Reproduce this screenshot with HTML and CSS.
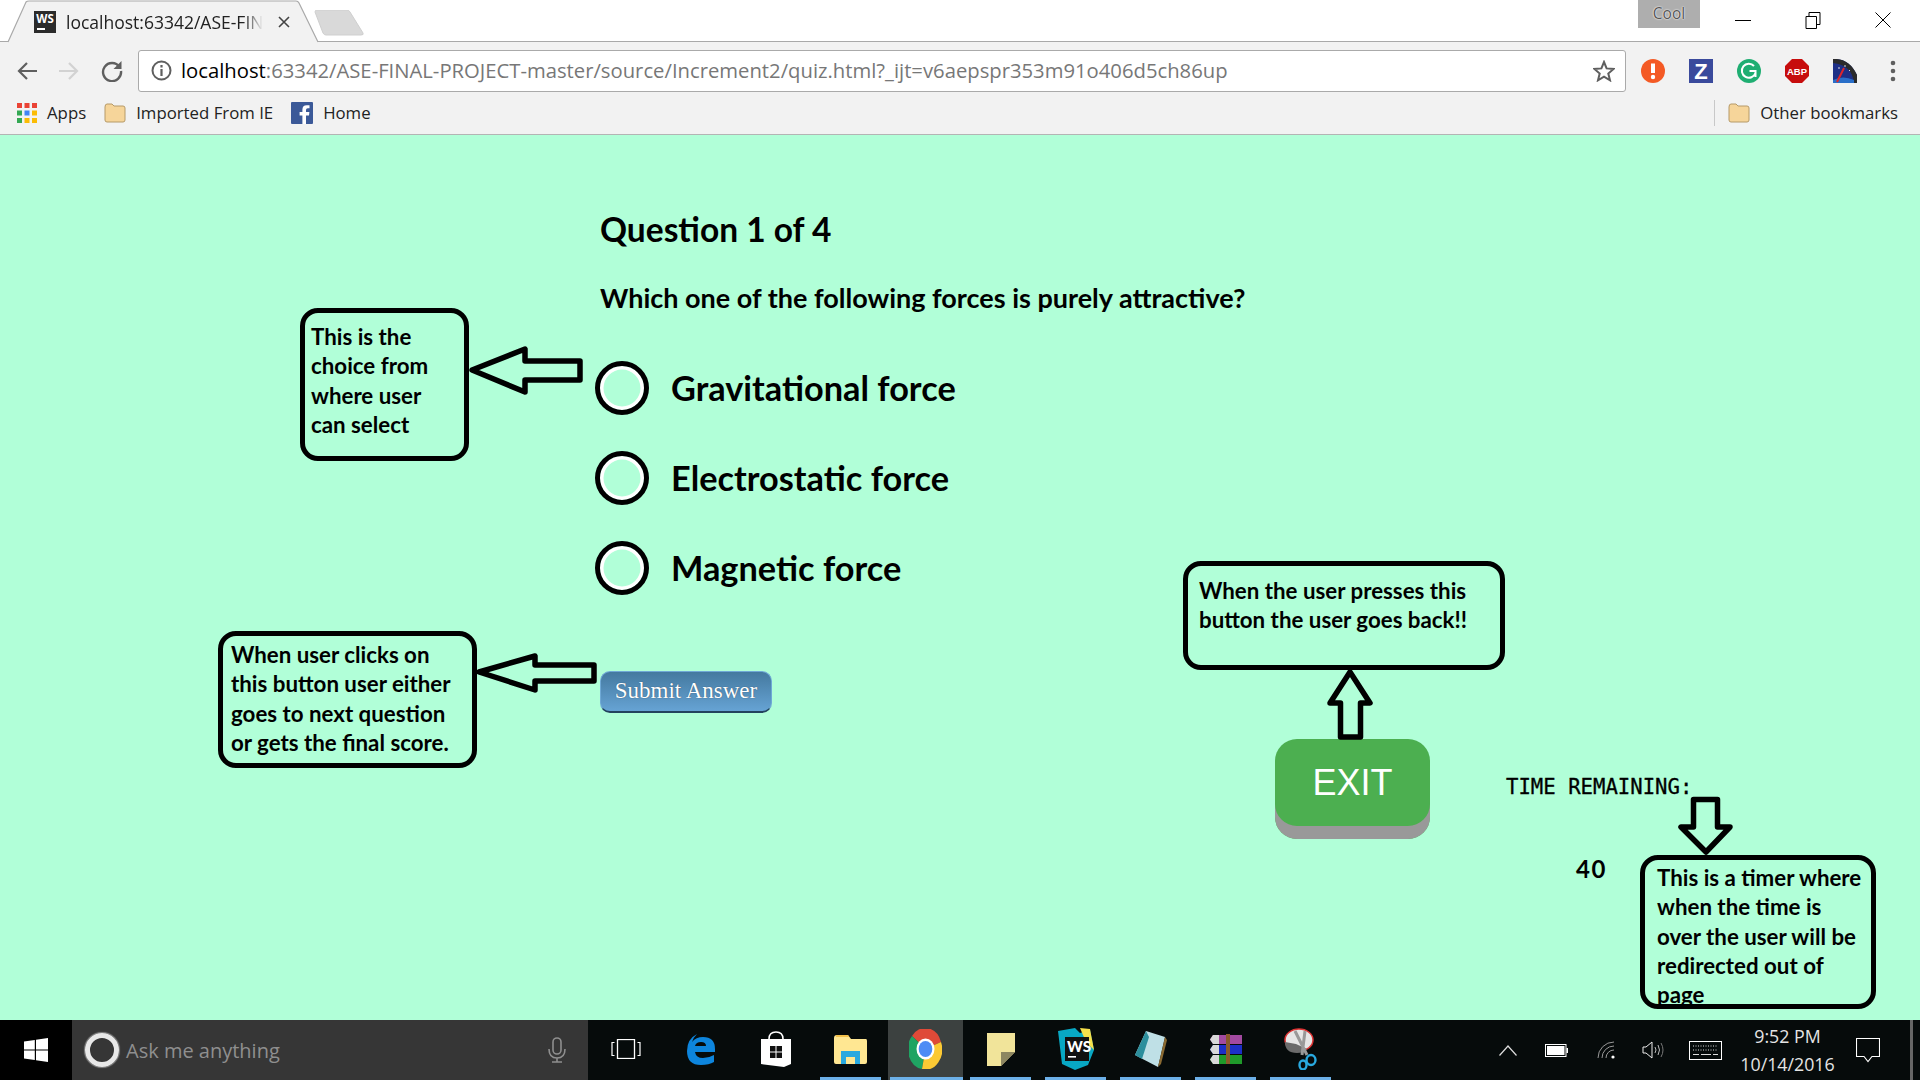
FILE: index.html
```html
<!DOCTYPE html>
<html>
<head>
    <title>localhost:63342/ASE-FINAL-PROJECT-master</title>
    <link rel="stylesheet" href="styles.css">
</head>
<body>
    <!-- Browser frame -->
    <header class="browser">
        <div class="tabstrip">
            <div class="tab">
                <svg class="tab-shape" width="312" height="43" viewBox="0 0 312 43"><path d="M1 42 L19 2 Q20 1 22 1 L289 1 Q291 1 292 3 L311 42" fill="#f2f2f2" stroke="#a9a9a9" stroke-width="1.2"/></svg>
                <span class="ws-logo">WS</span>
                <span class="tab-title">localhost:63342/ASE-FIN</span>
                <svg class="tab-close" width="12" height="12" viewBox="0 0 12 12"><path d="M1 1 L11 11 M11 1 L1 11" stroke="#444" stroke-width="1.6"/></svg>
            </div>
            <svg class="newtab" width="50" height="26" viewBox="0 0 50 26"><path d="M1 2 Q1 0 3 0 L33 0 Q35 0 36 2 L49 23 Q50 25 47 25 L12 25 Q10 25 9 23 Z" fill="#d9d9d9" stroke="#cfcfcf"/></svg>
            <span class="cool">Cool</span>
            <div class="winctl">
                <svg width="16" height="16" viewBox="0 0 16 16"><path d="M0 8.5 H16" stroke="#000"/></svg>
                <svg width="16" height="18" viewBox="0 0 16 18"><path d="M1 5.5 H11.5 V17.5 H1 Z M4 5 V1.5 H15 V13.5 H12" fill="none" stroke="#000"/></svg>
                <svg width="16" height="16" viewBox="0 0 16 16"><path d="M0.5 0.5 L15.5 15.5 M15.5 0.5 L0.5 15.5" stroke="#000"/></svg>
            </div>
        </div>
        <div class="toolbar">
            <svg class="nav" width="20" height="20" viewBox="0 0 20 20"><path d="M20 10 H2 M10 2 L2 10 L10 18" fill="none" stroke="#5f5f5f" stroke-width="2.2"/></svg>
            <svg class="nav" width="20" height="20" viewBox="0 0 20 20"><path d="M0 10 H18 M10 2 L18 10 L10 18" fill="none" stroke="#d2d2d2" stroke-width="2.2"/></svg>
            <svg class="nav" width="22" height="22" viewBox="0 0 22 22"><path d="M18.5 7 A9 9 0 1 0 20 11" fill="none" stroke="#5f5f5f" stroke-width="2.4"/><path d="M20.5 1 V9 H12.5 Z" fill="#5f5f5f"/></svg>
            <div class="omnibox">
                <svg width="21" height="21" viewBox="0 0 21 21"><circle cx="10.5" cy="10.5" r="9" fill="none" stroke="#5f5f5f" stroke-width="2"/><path d="M10.5 9 V16 M10.5 5 V7.4" stroke="#5f5f5f" stroke-width="2.2"/></svg>
                <span class="url"><b>localhost</b>:63342/ASE-FINAL-PROJECT-master/source/Increment2/quiz.html?_ijt=v6aepspr353m91o406d5ch86up</span>
                <svg class="star" width="22" height="22" viewBox="0 0 22 22"><path d="M11 2 L13.6 8.4 L20.6 9 L15.3 13.5 L17 20.3 L11 16.7 L5 20.3 L6.7 13.5 L1.4 9 L8.4 8.4 Z" fill="none" stroke="#5f5f5f" stroke-width="2"/></svg>
            </div>
            <div class="extensions">
                <svg width="24" height="24" viewBox="0 0 24 24"><circle cx="12" cy="12" r="12" fill="#f45a25"/><path d="M12 4.5 V14" stroke="#fff" stroke-width="4"/><circle cx="12" cy="18" r="2.2" fill="#fff"/></svg>
                <svg width="24" height="24" viewBox="0 0 24 24"><rect width="24" height="24" fill="#3a4a9c"/><text x="12" y="20" class="ext-z">Z</text></svg>
                <svg width="24" height="24" viewBox="0 0 24 24"><circle cx="12" cy="12" r="12" fill="#1fae72"/><path d="M17 7 A7 7 0 1 0 18.5 14 L18.5 12 H12.5 M18.5 14 V18" fill="none" stroke="#fff" stroke-width="2"/></svg>
                <svg width="24" height="24" viewBox="0 0 24 24"><path d="M7 0 H17 L24 7 V17 L17 24 H7 L0 17 V7 Z" fill="#c70d0d"/><text x="12" y="16" class="ext-abp">ABP</text></svg>
                <svg width="24" height="24" viewBox="0 0 24 24"><path d="M0 24 V0 Q16 -1 24 16 V24 Z" fill="#1e2f86"/><path d="M0 0 Q16 -1 24 16 V24 H21 Q19 6 0 4 Z" fill="#2b2b2b"/><path d="M0 24 H21 V21 Q10 16 0 21 Z" fill="#2a6fc9"/><path d="M4 23 L11 9" stroke="#e0262a" stroke-width="2"/><path d="M6 8 V10 M12 6 V8 M17 11 L16 12" stroke="#ddd"/></svg>
                <svg class="ext-menu" width="6" height="22" viewBox="0 0 6 22"><circle cx="3" cy="3" r="2.3" fill="#5f5f5f"/><circle cx="3" cy="11" r="2.3" fill="#5f5f5f"/><circle cx="3" cy="19" r="2.3" fill="#5f5f5f"/></svg>
            </div>
        </div>
        <div class="bookmarks">
            <a class="bookmark">
                <svg width="20" height="20" viewBox="0 0 20 20"><rect width="5" height="5" fill="#ea4335"/><rect x="7.5" width="5" height="5" fill="#ea4335"/><rect x="15" width="5" height="5" fill="#ea4335"/><rect y="7.5" width="5" height="5" fill="#34a853"/><rect x="7.5" y="7.5" width="5" height="5" fill="#4285f4"/><rect x="15" y="7.5" width="5" height="5" fill="#fbbc05"/><rect y="15" width="5" height="5" fill="#34a853"/><rect x="7.5" y="15" width="5" height="5" fill="#fbbc05"/><rect x="15" y="15" width="5" height="5" fill="#fbbc05"/></svg>
                Apps
            </a>
            <a class="bookmark">
                <svg class="folder" width="22" height="20" viewBox="0 0 22 20"><path d="M1 4 Q1 1 3 1 H8 L10 3 H19 Q21 3 21 5 V17 Q21 19 19 19 H3 Q1 19 1 17 Z" fill="#f6d59a" stroke="#b69a68"/></svg>
                Imported From IE
            </a>
            <a class="bookmark">
                <svg width="22" height="22" viewBox="0 0 22 22"><rect width="22" height="22" rx="1" fill="#3b5998"/><path d="M15 22 V13.5 H18 L18.4 10 H15 V8 Q15 6.3 16.8 6.3 H18.5 V3.2 H15.8 Q11.4 3.2 11.4 7.6 V10 H8.6 V13.5 H11.4 V22 Z" fill="#fff"/></svg>
                Home
            </a>
            <a class="bookmark other">
                <svg class="folder" width="22" height="20" viewBox="0 0 22 20"><path d="M1 4 Q1 1 3 1 H8 L10 3 H19 Q21 3 21 5 V17 Q21 19 19 19 H3 Q1 19 1 17 Z" fill="#f6d59a" stroke="#b69a68"/></svg>
                Other bookmarks
            </a>
        </div>
    </header>

    <main class="page">
        <section class="quiz">
            <h1>Question 1 of 4</h1>
            <p class="question">Which one of the following forces is purely attractive?</p>
            <label class="choice"><input type="radio" name="answer"> Gravitational force</label>
            <label class="choice"><input type="radio" name="answer"> Electrostatic force</label>
            <label class="choice"><input type="radio" name="answer"> Magnetic force</label>
            <button class="submit">Submit Answer</button>
        </section>
        <button class="exit">EXIT</button>
        <div class="timer">
            <p class="timer-label">TIME REMAINING:</p>
            <p class="timer-count">40</p>
        </div>

        <!-- Annotations drawn over the page -->
        <div class="callout callout-choice">This is the<br>choice from<br>where user<br>can select</div>
        <div class="callout callout-submit">When user clicks on<br>this button user either<br>goes to next question<br>or gets the final score.</div>
        <div class="callout callout-exit">When the user presses this<br>button the user goes back!!</div>
        <div class="callout callout-timer">This is a timer where<br>when the time is<br>over the user will be<br>redirected out of<br>page</div>
        <svg class="arrows" width="1920" height="885" viewBox="0 135 1920 885">
            <polygon points="472,370 525,349 525,361 580,361 580,380 525,380 525,392"/>
            <polygon points="479,672 535,656 535,665 594,665 594,681 535,681 535,690"/>
            <polygon points="1350,672 1370,703 1360.5,703 1360.5,737 1340.5,737 1340.5,703 1330,703"/>
            <polygon points="1693.5,799.5 1717.5,799.5 1717.5,827 1730,827 1706,852 1681,827 1693.5,827"/>
        </svg>
    </main>

    <!-- Windows taskbar -->
    <footer class="taskbar">
        <div class="start">
            <svg width="24" height="24" viewBox="0 0 24 24"><path d="M0 3.4 L10.8 1.9 V11.4 H0 Z M12 1.7 L24 0 V11.4 H12 Z M0 12.6 H10.8 V22.1 L0 20.6 Z M12 12.6 H24 V24 L12 22.3 Z" fill="#fff"/></svg>
        </div>
        <div class="search">
            <span class="cortana"></span>
            <span class="search-text">Ask me anything</span>
            <svg class="mic" width="18" height="26" viewBox="0 0 18 26"><rect x="5" y="1" width="8" height="16" rx="4" fill="none" stroke="#8f8f8f" stroke-width="1.6"/><path d="M1 12 Q1 21 9 21 Q17 21 17 12 M9 21 V25 M4 25 H14" fill="none" stroke="#8f8f8f" stroke-width="1.6"/></svg>
        </div>
        <div class="apps">
            <div class="app">
                <svg width="30" height="20" viewBox="0 0 30 20"><rect x="6.5" y="0.5" width="17" height="19" fill="none" stroke="#fff" stroke-width="1.3"/><path d="M3.5 3.5 H1 V16.5 H3.5 M26.5 3.5 H29 V16.5 H26.5" fill="none" stroke="#fff" stroke-width="1.2"/></svg>
            </div>
            <div class="app">
                <svg width="30" height="32" viewBox="0 0 30 32"><path d="M29 19 H9 Q10 25 17 25 Q23 25 28 22 V29 Q23 32 15 32 Q1 32 1 18 Q1 6 11 1 Q7 5 6 9 Q10 4 17 4 Q29 4 29 16 Z M20 13 Q20 9 15 9 Q10 9 9 13 Z" fill="#0d85dd" fill-rule="evenodd"/></svg>
            </div>
            <div class="app">
                <svg width="32" height="36" viewBox="0 0 32 36"><path d="M9 8 Q9 1 16 1 Q23 1 23 8" fill="none" stroke="#fff" stroke-width="1.6"/><path d="M1 8 H31 V33 L24 36 L1 33 Z" fill="#fff"/><path d="M10 15 H15.5 V20.5 H10 Z M16.5 15 H22 V20.5 H16.5 Z M10 21.5 H15.5 V27 H10 Z M16.5 21.5 H22 V27 H16.5 Z" fill="#111"/></svg>
            </div>
            <div class="app open">
                <svg width="33" height="30" viewBox="0 0 33 30"><path d="M0 4 Q0 1 3 1 H14 L17 5 H32 Q33 5 33 7 V28 Q33 30 31 30 H2 Q0 30 0 28 Z" fill="#ffe792"/><path d="M2 1 H14 L15 3 H2 Z" fill="#f3c14b"/><path d="M7 30 V17 H26 V30 H21 V23 H12 V30 Z" fill="#29a9df"/></svg>
            </div>
            <div class="app open active">
                <svg width="33" height="40" viewBox="0 0 33 40"><path d="M16.5 20 L3 7 A16.5 20 0 0 1 32 13 Z" fill="#df4a38"/><path d="M16.5 20 L3 7 A16.5 20 0 0 0 13 40 Z" fill="#1fa463"/><path d="M16.5 20 L32 13 A16.5 20 0 0 1 13 40 Z" fill="#fcc934"/><ellipse cx="16.5" cy="20" rx="9" ry="10.5" fill="#fff"/><ellipse cx="16.5" cy="20" rx="6.8" ry="8" fill="#4d8cf5"/></svg>
            </div>
            <div class="app open">
                <svg width="28" height="33" viewBox="0 0 28 33"><path d="M0 0 H28 V19 L14 33 H0 Z" fill="#f1e49a"/><path d="M28 19 L14 33 V19 Z" fill="#8c8660"/></svg>
            </div>
            <div class="app open">
                <svg width="36" height="42" viewBox="0 0 36 42"><path d="M0 3 L17 0 L22 5 L32 2 L36 22 L30 37 L17 42 L4 36 Z" fill="#08a8c4"/><path d="M22 0 L32 1 L36 22 L28 14 Z" fill="#f5e04b"/><rect x="7" y="9" width="24" height="24" fill="#111"/><rect x="10" y="28" width="8" height="1.6" fill="#fff"/></svg>
                <span class="ws-text">WS</span>
            </div>
            <div class="app open">
                <svg width="33" height="36" viewBox="0 0 33 36"><path d="M12 0 L31 6 L24 36 L1 24 Z" fill="#bfe0e6"/><path d="M12 0 L1 24 L8 28 L15 6 Z" fill="#2c8f9d"/><path d="M31 6 L33 9 L27 33 L24 36 Z" fill="#8a6a32"/></svg>
            </div>
            <div class="app open">
                <svg width="32" height="30" viewBox="0 0 32 30"><path d="M3 1 H32 V10 H3 L0 5.5 Z" fill="#a24aa0"/><path d="M3 11 H32 V20 H3 L0 15.5 Z" fill="#1c2fc7"/><path d="M3 21 H32 V30 H3 L0 25.5 Z" fill="#1f9a2a"/><path d="M0 5.5 L3 10 H9 V1 H3 Z M0 15.5 L3 20 H9 V11 H3 Z M0 25.5 L3 30 H9 V21 H3 Z" fill="#d8d8d8"/><rect x="16" width="4" height="30" fill="#8a5a2a"/></svg>
            </div>
            <div class="app open">
                <svg width="33" height="42" viewBox="0 0 33 42"><ellipse cx="15" cy="12" rx="14" ry="11" fill="#e6e6e6" stroke="#d33" stroke-width="1.5"/><path d="M1 14 Q1 25 13 25 Q20 25 23 21 L12 16 Z" fill="#6b6b6b"/><path d="M11 3 L23 27 M21 3 L18 27" stroke="#999" stroke-width="3"/><ellipse cx="27" cy="32" rx="4.5" ry="5" fill="none" stroke="#29a9df" stroke-width="2.4"/><ellipse cx="19" cy="37" rx="3.5" ry="4.5" fill="none" stroke="#29a9df" stroke-width="2.4"/></svg>
            </div>
        </div>
        <div class="tray">
            <svg class="tray-chevron" width="18" height="11" viewBox="0 0 18 11"><path d="M0.5 10.5 L9 1 L17.5 10.5" fill="none" stroke="#ddd" stroke-width="1.2"/></svg>
            <svg class="tray-battery" width="23" height="13" viewBox="0 0 23 13"><rect x="0.5" y="0.5" width="20.5" height="12" fill="none" stroke="#fff"/><rect x="2" y="2" width="17.5" height="9" fill="#fff"/><rect x="21.5" y="4" width="1.5" height="5" fill="#fff"/></svg>
            <svg class="tray-wifi" width="18" height="18" viewBox="0 0 18 18"><path d="M1 17 A16 16 0 0 1 17 1 M5 17 A12 12 0 0 1 17 5 M9 17 A8 8 0 0 1 17 9" fill="none" stroke="#999" stroke-width="1"/><circle cx="16" cy="16" r="1.6" fill="#fff"/></svg>
            <svg class="tray-speaker" width="22" height="18" viewBox="0 0 22 18"><path d="M1 6 H4 L10 1 V17 L4 12 H1 Z" fill="none" stroke="#eee"/><path d="M13 6 Q15 9 13 12 M16 4 Q19 9 16 14" fill="none" stroke="#bbb"/><path d="M19 2 Q23 9 19 16" fill="none" stroke="#777"/></svg>
            <svg class="tray-keyboard" width="33" height="19" viewBox="0 0 33 19"><rect x="0.5" y="0.5" width="32" height="18" fill="none" stroke="#fff"/><path d="M4 5 H29 M4 9 H29" stroke="#ddd" stroke-dasharray="1 1.5"/><path d="M4 13.5 H10 M12 13.5 H22 M24 13.5 H29" stroke="#ddd"/></svg>
            <div class="clock">
                <span>9:52 PM</span>
                <span>10/14/2016</span>
            </div>
            <svg class="tray-notify" width="24" height="25" viewBox="0 0 24 25"><path d="M0.5 0.5 H23.5 V18.5 H16 L12 23.5 L8 18.5 H0.5 Z" fill="none" stroke="#fff" stroke-width="1.1"/></svg>
            <span class="show-desktop"></span>
        </div>
    </footer>
</body>
</html>
```

FILE: styles.css
```css
* {
    box-sizing: border-box;
}
body {
    margin: 0;
    width: 1920px;
    height: 1080px;
    display: flex;
    flex-direction: column;
    overflow: hidden;
    font-family: Lato, sans-serif;
    background-color: #b1ffd8;
}

/* Browser frame */
.browser {
    flex: none;
    height: 135px;
    font-family: "Open Sans", sans-serif;
    background-color: #f2f2f2;
    border-bottom: 1px solid #b4b4b4;
}
.tabstrip {
    position: relative;
    height: 42px;
    display: flex;
    background-color: #fff;
    border-bottom: 1px solid #a9a9a9;
}
.tab {
    position: relative;
    width: 312px;
    margin-left: 7px;
    height: 43px;
    display: flex;
    align-items: center;
    padding-left: 27px;
}
.tab-shape {
    position: absolute;
    left: 0;
    top: 0;
}
.ws-logo {
    position: relative;
    width: 22px;
    height: 22px;
    font-size: 11.5px;
    font-weight: 700;
    line-height: 15px;
    text-align: center;
    color: #fff;
    background-color: #2b2b2b;
}
.ws-logo::after {
    content: "";
    position: absolute;
    left: 3px;
    bottom: 3px;
    width: 8px;
    height: 1.5px;
    background-color: #fff;
}
.tab-title {
    position: relative;
    width: 197px;
    margin-left: 10px;
    white-space: nowrap;
    font-size: 17.5px;
    color: #222;
    -webkit-mask-image: linear-gradient(to right, #000 90%, transparent);
    mask-image: linear-gradient(to right, #000 90%, transparent);
}
.tab-close {
    position: relative;
    margin-left: 15px;
}
.newtab {
    margin: 10px 0 0 -5px;
}
.cool {
    width: 62px;
    height: 28px;
    margin-left: 1274px;
    text-align: center;
    font-size: 15.5px;
    line-height: 26px;
    color: #555;
    background-color: #aeaeae;
    text-shadow: 0 0 2px #fff, 0 0 1px #fff;
}
.winctl {
    display: flex;
    gap: 54px;
    margin-left: 35px;
    height: 40px;
    align-items: center;
}
.toolbar {
    height: 57px;
    display: flex;
    align-items: center;
    padding-left: 17px;
}
.nav {
    margin-right: 22px;
}
.omnibox {
    width: 1488px;
    height: 42px;
    margin-left: -7px;
    display: flex;
    align-items: center;
    padding: 0 10px 0 12px;
    background-color: #fff;
    border: 1px solid #aaa;
    border-radius: 3px;
}
.url {
    flex: 1;
    margin-left: 9px;
    padding-bottom: 2px;
    font-size: 20.25px;
    white-space: nowrap;
    color: #777;
}
.url b {
    font-weight: 400;
    color: #000;
}
.extensions {
    display: flex;
    align-items: center;
    gap: 24px;
    margin-left: 15px;
}
.ext-z {
    font: 700 22px "Liberation Sans", sans-serif;
    fill: #fff;
    text-anchor: middle;
}
.ext-abp {
    font: 700 9.5px "Liberation Sans", sans-serif;
    fill: #fff;
    text-anchor: middle;
}
.ext-menu {
    margin-left: 9px;
}
.bookmarks {
    height: 35px;
    display: flex;
    align-items: center;
    padding: 0 22px 8px 17px;
    gap: 18px;
    font-size: 16.8px;
    color: #222;
}
.bookmark {
    display: flex;
    align-items: center;
    gap: 10px;
}
.other {
    margin-left: auto;
    height: 26px;
    padding-left: 13px;
    border-left: 1px solid #c8c8c8;
}

/* Quiz page */
.page {
    position: relative;
    flex: 1;
    display: flex;
    padding-left: 600px;
}
.quiz {
    width: 675px;
}
.quiz h1 {
    margin: 74px 0 0;
    font-size: 33.5px;
    line-height: 40px;
    font-weight: 700;
    color: #000;
}
.question {
    margin: 32px 0 46px;
    font-size: 27px;
    line-height: 34px;
    font-weight: 700;
    white-space: nowrap;
}
.choice {
    display: flex;
    align-items: center;
    gap: 22px;
    height: 54px;
    margin: 0 0 36px -5px;
    font-size: 34.3px;
    line-height: 52px;
    font-weight: 700;
}
.choice input {
    appearance: none;
    width: 54px;
    height: 54px;
    margin: 0;
    border: 5px solid #000;
    border-radius: 50%;
    background-color: #b1ffd8;
    box-shadow: inset 0 0 0 3.5px #fff;
}
.submit {
    display: block;
    width: 172px;
    height: 42px;
    margin-top: 76px;
    padding: 0 0 2px;
    font-family: "Liberation Serif", serif;
    font-size: 23px;
    color: #fff;
    border: 1px solid #6fa9d6;
    border-bottom: 2px solid #23435e;
    border-radius: 10px;
    background: linear-gradient(#44799f, #66a3d4);
    text-shadow: 0 0 1px #23435e;
}
.exit {
    width: 155px;
    height: 100px;
    margin-top: 604px;
    padding: 0 0 13px;
    font-family: "Liberation Sans", sans-serif;
    font-size: 36px;
    color: #fff;
    border: 0;
    border-radius: 22px;
    background-color: #4caf50;
    box-shadow: inset 0 -13px 0 #999;
}
.timer {
    margin: 640px 0 0 76px;
}
.timer-label {
    margin: 0;
    font-family: "DejaVu Sans Mono", monospace;
    font-size: 20.65px;
    line-height: 24px;
    white-space: nowrap;
    -webkit-text-stroke: 0.3px #000;
}
.timer-count {
    margin: 56px 0 0 70px;
    font-size: 24px;
    line-height: 28px;
    font-weight: 700;
    letter-spacing: 1.5px;
}

/* Annotations */
.callout {
    position: absolute;
    font-size: 22.3px;
    line-height: 29.3px;
    font-weight: 700;
    color: #000;
    white-space: nowrap;
    border: 5px solid #000;
    border-radius: 18px;
}
.callout-choice {
    left: 300px;
    top: 173px;
    width: 169px;
    height: 153px;
    padding: 9px 0 0 6px;
}
.callout-submit {
    left: 218px;
    top: 496px;
    width: 259px;
    height: 137px;
    padding: 4px 0 0 8px;
}
.callout-exit {
    left: 1183px;
    top: 426px;
    width: 322px;
    height: 109px;
    padding: 10px 0 0 11px;
}
.callout-timer {
    left: 1640px;
    top: 720px;
    width: 236px;
    height: 154px;
    padding: 3px 0 0 12px;
}
.arrows {
    position: absolute;
    left: 0;
    top: 0;
    pointer-events: none;
}
.arrows polygon {
    fill: none;
    stroke: #000;
    stroke-width: 5.5;
    stroke-linejoin: round;
}

/* Taskbar */
.taskbar {
    flex: none;
    height: 60px;
    display: flex;
    background-color: #060b0b;
}
.start {
    width: 72px;
    display: flex;
    align-items: center;
    justify-content: center;
    background-color: #000;
}
.search {
    width: 516px;
    display: flex;
    align-items: center;
    padding-left: 13px;
    background-color: #363636;
}
.cortana {
    width: 34px;
    height: 34px;
    border: 5px solid #e8e8e8;
    border-radius: 50%;
    box-shadow: 0 0 1px 1px #888;
}
.search-text {
    margin-left: 7px;
    font-family: "Open Sans", sans-serif;
    font-size: 20px;
    color: #8f8f8f;
}
.mic {
    margin-left: 268px;
}
.apps {
    display: flex;
}
.app {
    position: relative;
    width: 75px;
    display: flex;
    align-items: center;
    justify-content: center;
    padding-bottom: 2px;
}
.app.open::after {
    content: "";
    position: absolute;
    left: 7px;
    right: 7px;
    bottom: 0;
    height: 3px;
    background-color: #6cb0e8;
}
.app.active {
    background-color: #3c4140;
}
.app.active::after {
    left: 2px;
    right: 0;
}
.ws-text {
    position: absolute;
    left: 29px;
    top: 17px;
    font-size: 15px;
    font-weight: 900;
    color: #fff;
}
.tray {
    flex: 1;
    display: flex;
    align-items: center;
    padding-left: 161px;
    color: #e4e4e4;
}
.tray-battery {
    margin-left: 28px;
}
.tray-wifi {
    margin-left: 29px;
}
.tray-speaker {
    margin-left: 27px;
}
.tray-keyboard {
    margin-left: 25px;
}
.clock {
    width: 131px;
    display: flex;
    flex-direction: column;
    align-items: center;
    gap: 6px;
    font-family: "Open Sans", sans-serif;
    font-size: 17.8px;
    line-height: 22px;
}
.tray-notify {
    margin-left: 3px;
}
.show-desktop {
    width: 3px;
    height: 60px;
    margin-left: 30px;
    background-color: #666;
}
```
